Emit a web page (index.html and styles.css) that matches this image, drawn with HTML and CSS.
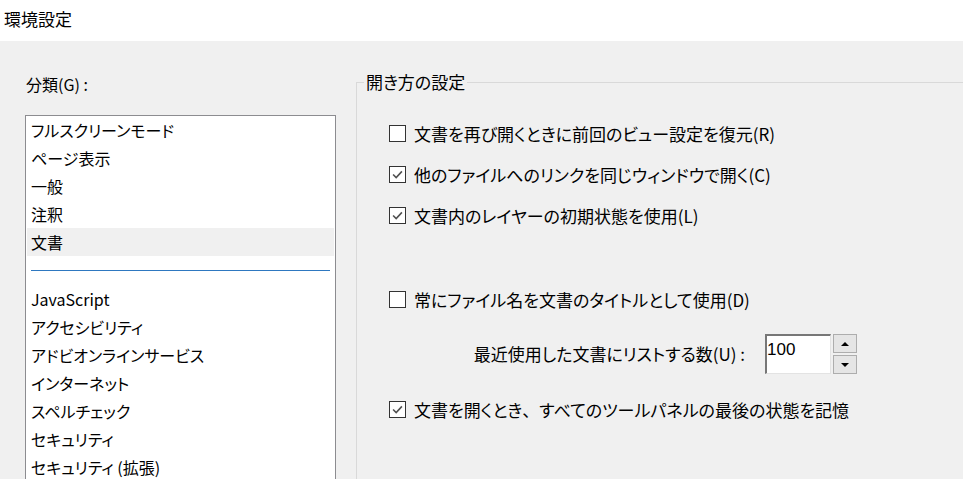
FILE: index.html
```html
<!DOCTYPE html>
<html lang="ja">
<head>
<meta charset="utf-8">
<title>環境設定</title>
<link rel="stylesheet" href="styles.css">
</head>
<body>
<div class="titlebar">環境設定</div>
<div class="main">
  <div class="left">
    <div class="cat-label">分類(G) :</div>
    <div class="listbox">
      <div class="item">フルスクリーンモード</div>
      <div class="item">ページ表示</div>
      <div class="item">一般</div>
      <div class="item">注釈</div>
      <div class="item selected">文書</div>
      <div class="sep"><div class="sep-line"></div></div>
      <div class="item">JavaScript</div>
      <div class="item">アクセシビリティ</div>
      <div class="item">アドビオンラインサービス</div>
      <div class="item">インターネット</div>
      <div class="item">スペルチェック</div>
      <div class="item">セキュリティ</div>
      <div class="item">セキュリティ (拡張)</div>
    </div>
  </div>
  <div class="group">
    <div class="group-title">開き方の設定</div>
    <div class="options">
      <div class="check-row r1"><span class="box"></span><span>文書を再び開くときに前回のビュー設定を復元(R)</span></div>
      <div class="check-row r2"><span class="box"><svg viewBox="0 0 17 17" class="tick"><polyline points="3.5,8.5 7,12 13.5,5" /></svg></span><span>他のファイルへのリンクを同じウィンドウで開く(C)</span></div>
      <div class="check-row r3"><span class="box"><svg viewBox="0 0 17 17" class="tick"><polyline points="3.5,8.5 7,12 13.5,5" /></svg></span><span>文書内のレイヤーの初期状態を使用(L)</span></div>
      <div class="check-row r4"><span class="box"></span><span>常にファイル名を文書のタイトルとして使用(D)</span></div>
      <div class="spin-row">
        <span class="spin-label">最近使用した文書にリストする数(U) :</span>
        <span class="spin-input">100</span>
        <span class="spin-buttons">
          <span class="spin-btn"><span class="tri-up"></span></span>
          <span class="spin-btn"><span class="tri-down"></span></span>
        </span>
      </div>
      <div class="check-row r5"><span class="box"><svg viewBox="0 0 17 17" class="tick"><polyline points="3.5,8.5 7,12 13.5,5" /></svg></span><span>文書を開くとき<span class="fullpunct">、</span>すべてのツールパネルの最後の状態を記憶</span></div>
    </div>
  </div>
</div>
</body>
</html>
```
FILE: styles.css
```css
html, body {
  margin: 0;
  padding: 0;
  height: 100%;
  overflow: hidden;
}
body {
  background: #f0f0f0;
  font-family: "Noto Sans CJK JP", "Noto Sans", sans-serif;
  font-size: 16px;
  color: #000;
  font-feature-settings: "palt";
}
.titlebar {
  background: #fff;
  height: 41px;
  line-height: 38px;
  padding-left: 4px;
  font-size: 17px;
}
.main {
  display: flex;
  align-items: flex-start;
  padding-left: 25px;
}
.left {
  width: 311px;
  flex: none;
}
.cat-label {
  margin-top: 31px;
  height: 25px;
  line-height: 25px;
  padding-left: 1px;
}
.listbox {
  margin-top: 18px;
  background: #fff;
  border: 1px solid #8c8c90;
  height: 400px;
  padding: 0 1px;
}
.item {
  height: 28px;
  line-height: 28px;
  padding-left: 4px;
  white-space: nowrap;
}
.item.selected {
  background: #f0f0f0;
}
.sep {
  height: 29px;
  padding: 14px 4px 0;
  box-sizing: border-box;
}
.sep-line {
  height: 1px;
  background: #2e78c0;
}
.group {
  margin-left: 20px;
  margin-top: 41px;
  flex: 1;
  border-top: 1px solid #d9d9d9;
  border-left: 1px solid #d9d9d9;
  height: 500px;
  position: relative;
  font-size: 17px;
}
.group-title {
  position: absolute;
  top: -14px;
  left: 7px;
  padding: 0 2px;
  background: #f0f0f0;
  line-height: 26px;
}
.options {
  padding-left: 32px;
  padding-top: 37px;
}
.check-row {
  display: flex;
  align-items: center;
  gap: 8px;
  height: 26px;
  white-space: nowrap;
}
.fullpunct {
  font-feature-settings: normal;
}
.r2 { margin-top: 15px; }
.r3 { margin-top: 15px; }
.r4 { margin-top: 58px; }
.r5 { margin-top: 22px; }
.box {
  width: 17px;
  height: 17px;
  box-sizing: border-box;
  border: 1px solid #333;
  background: #fff;
  flex: none;
  display: block;
}
.tick {
  display: block;
  width: 15px;
  height: 15px;
}
.tick polyline {
  fill: none;
  stroke: #505050;
  stroke-width: 1.8;
}
.spin-row {
  display: flex;
  align-items: flex-start;
  margin-top: 22px;
  height: 40px;
}
.spin-label {
  width: 356px;
  text-align: right;
  line-height: 40px;
  white-space: nowrap;
}
.spin-input {
  margin-left: 20px;
  width: 66px;
  height: 40px;
  box-sizing: border-box;
  background: #fff;
  border-top: 2px solid #777;
  border-left: 2px solid #777;
  border-right: 1px solid #e3e3e3;
  border-bottom: 1px solid #e3e3e3;
  padding-left: 0;
  line-height: 28px;
  font-family: "Liberation Sans", Arial, sans-serif;
  font-size: 17px;
}
.spin-buttons {
  margin-left: 2px;
  display: flex;
  flex-direction: column;
  gap: 2px;
}
.spin-btn {
  width: 24px;
  height: 19px;
  box-sizing: border-box;
  background: #e5e5e5;
  border: 1px solid #adadad;
  display: flex;
  align-items: center;
  justify-content: center;
}
.tri-up {
  width: 0;
  height: 0;
  border-left: 4px solid transparent;
  border-right: 4px solid transparent;
  border-bottom: 4px solid #000;
}
.tri-down {
  width: 0;
  height: 0;
  border-left: 4px solid transparent;
  border-right: 4px solid transparent;
  border-top: 4px solid #000;
}
```
